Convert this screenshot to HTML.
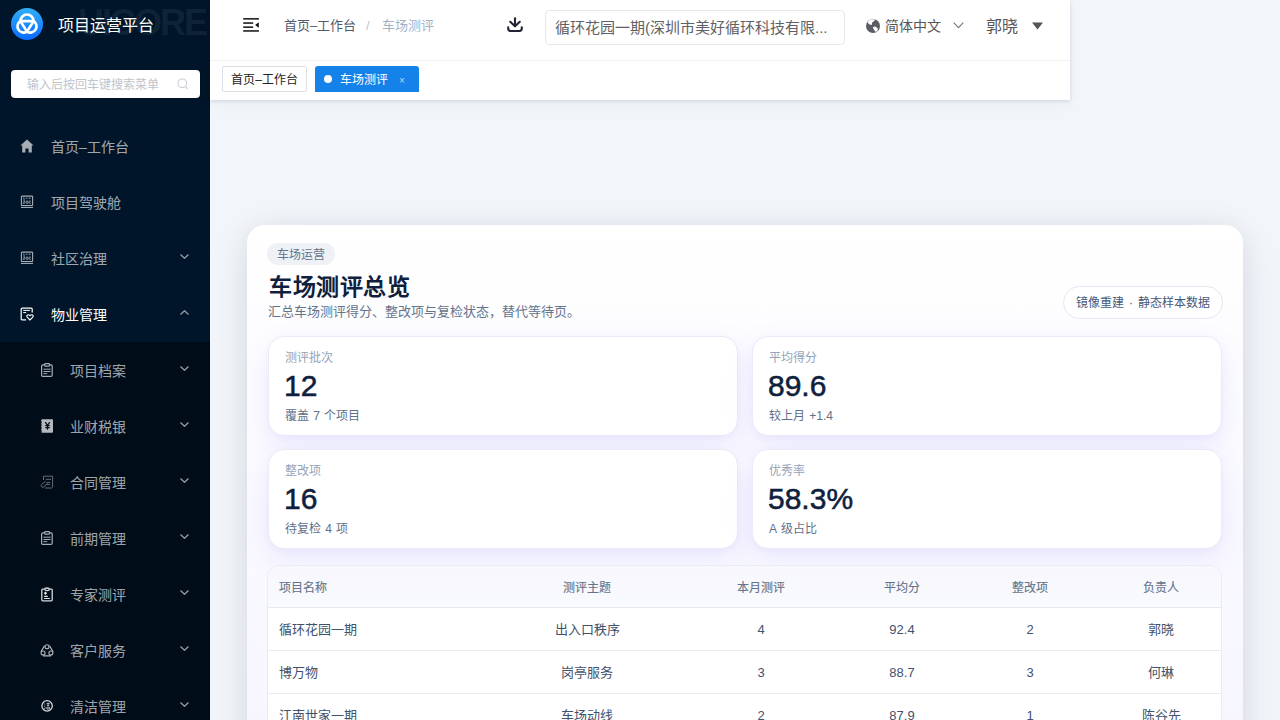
<!DOCTYPE html>
<html lang="zh-CN">
<head>
<meta charset="utf-8">
<style>
*{box-sizing:border-box;margin:0;padding:0}
html,body{width:1280px;height:720px;overflow:hidden}
body{font-family:"Liberation Sans",sans-serif;background:#f2f5fa;position:relative}
.abs{position:absolute}
/* sidebar */
#side{position:absolute;left:0;top:0;width:210px;height:720px;background:#001529;overflow:hidden}
#side .wm{position:absolute;left:78px;top:2px;font-size:36px;font-weight:bold;color:rgba(255,255,255,0.065);letter-spacing:-2px;white-space:nowrap}
#side .logo{position:absolute;left:11px;top:8px;width:32px;height:32px}
#side .title{position:absolute;left:58px;top:15px;font-size:16px;color:#fff;line-height:22px;white-space:nowrap}
#side .search{position:absolute;left:11px;top:70px;width:189px;height:28px;background:#fff;border-radius:4px}
#side .search span{position:absolute;left:16px;top:8px;font-size:12px;line-height:14px;color:#c0c4cc;white-space:nowrap}
#side .search svg{position:absolute;left:176px;top:78px}
.mi{position:absolute;left:0;width:210px;height:56px;color:rgba(255,255,255,0.65);font-size:14px}
.mi .t{position:absolute;left:51px;top:19px;line-height:20px;white-space:nowrap}
.mi .ic{position:absolute;left:20px;top:21px;width:14px;height:14px}
.mi .ch{position:absolute;left:179.5px;top:24px;width:9px;height:5px}
.mi.sub .t{left:70px}
.mi.sub .ic{left:40px}
#subbg{position:absolute;left:0;top:342px;width:210px;height:378px;background:#000c17}
/* header */
#hdr{position:absolute;left:210px;top:0;width:860px;height:100px;background:#fff;box-shadow:0 1px 4px rgba(0,21,41,0.12),0 4px 16px rgba(15,23,42,0.04)}
#hdr .line{position:absolute;left:0;top:60px;width:860px;height:1px;background:#f0f0f0}
.bc{position:absolute;top:16px;font-size:13px;line-height:20px;white-space:nowrap}
.sel{position:absolute;left:335px;top:10px;width:300px;height:35px;border:1px solid #e6e8ee;border-radius:4px}
.sel span{position:absolute;left:9px;top:6px;font-size:15px;line-height:22px;color:#5f6166;white-space:nowrap}
.tab{position:absolute;top:66px;height:26px;font-size:12px;line-height:26px;white-space:nowrap}
/* main card */
#card{position:absolute;left:247px;top:225px;width:996px;height:560px;border-radius:18px;background:linear-gradient(180deg,#ffffff 0%,#fbfbff 40%,#f6f5ff 100%);box-shadow:0 4px 26px rgba(20,24,40,0.08),0 10px 50px rgba(20,24,40,0.06)}
.badge{position:absolute;left:20px;top:18px;width:68px;height:22px;border-radius:11px;background:#eef1f5;color:#64748b;font-size:12px;line-height:24px;text-align:center}
.h1{position:absolute;left:22px;top:45px;font-size:23px;font-weight:bold;letter-spacing:0.6px;color:#0f1f3d;line-height:34px;white-space:nowrap}
.subt{position:absolute;left:21px;top:78px;font-size:13px;color:#64748b;line-height:18px;white-space:nowrap}
.pill{position:absolute;left:816px;top:61px;width:160px;height:33px;border:1px solid #e2e8f0;border-radius:17px;background:#fff;color:#46587a;font-size:12px;line-height:33px;text-align:center;white-space:nowrap}
.stat{position:absolute;width:470px;height:100px;border-radius:16px;background:#fff;box-shadow:0 2px 6px rgba(110,95,240,0.05),0 10px 30px rgba(110,95,240,0.11);border:1px solid #eceaf8}
.stat .l{position:absolute;left:16px;top:13px;font-size:12px;color:#94a3b8;line-height:16px;white-space:nowrap}
.stat .n{position:absolute;left:15px;top:32px;font-size:30px;font-weight:normal;-webkit-text-stroke:0.55px #0f1f3d;color:#0f1f3d;line-height:34px;white-space:nowrap}
.stat .s{position:absolute;left:16px;top:71px;font-size:12px;word-spacing:1px;color:#5f6f89;line-height:16px;white-space:nowrap}
#tbl{position:absolute;left:20px;top:340px;width:955px;height:240px;border:1px solid #e8ecf3;border-radius:12px;overflow:hidden;background:#fff}
#tbl .hd{position:absolute;left:0;top:0;width:953px;height:42px;background:linear-gradient(180deg,#f7f7fd,#f9fafd);border-bottom:1px solid #e5e9f0}
#tbl .row{position:absolute;left:0;width:953px;height:43px;border-bottom:1px solid #e9edf3}
.c{position:absolute;white-space:nowrap;text-align:center;transform:translateX(-50%)}
#tbl .hd .c,#tbl .hd .lft{top:14px;font-size:12px;color:#64748b;line-height:16px;-webkit-text-stroke:0.12px #64748b}
#tbl .row .c,#tbl .row .lft{top:13px;font-size:13px;color:#42516c;line-height:18px}
.lft{position:absolute;left:11px;white-space:nowrap}
</style>
</head>
<body>
<div id="side">
  <div id="subbg"></div>
  <div class="wm">UICORE</div>
  <svg class="logo" viewBox="0 0 32 32" width="32" height="32">
    <defs><linearGradient id="lg" x1="0" y1="0" x2="0" y2="1"><stop offset="0" stop-color="#30b0f8"/><stop offset="1" stop-color="#0a6aff"/></linearGradient></defs>
    <circle cx="16" cy="16" r="16" fill="url(#lg)"/>
    <g fill="none" stroke="#fff" stroke-width="2.7" stroke-linejoin="round"><path d="M9.4 13.1 L22.6 13.1 L16 23.6 Z"/><path d="M9.4 13.1 A6.6 6.6 0 0 1 22.6 13.1"/><path d="M22.6 13.1 A6.2 6.2 0 0 1 16 23.6"/><path d="M16 23.6 A6.2 6.2 0 0 1 9.4 13.1"/></g>
  </svg>
  <div class="title">项目运营平台</div>
  <div class="search"><span>输入后按回车键搜索菜单</span>
    <svg style="position:absolute;left:166px;top:8px" width="12" height="12" viewBox="0 0 12 12"><circle cx="5.3" cy="5.3" r="4.3" fill="none" stroke="#c9ccd3" stroke-width="1.1"/><path d="M8.4 8.4 L10.8 10.8" stroke="#c9ccd3" stroke-width="1.2"/></svg>
  </div>

  <div class="mi" style="top:118px">
    <svg class="ic" viewBox="0 0 14 14"><path d="M7 0.5 L13.6 6.6 L11.8 6.6 L11.8 13.5 L8.6 13.5 L8.6 9.4 L5.4 9.4 L5.4 13.5 L2.2 13.5 L2.2 6.6 L0.4 6.6 Z" fill="#a6adb4"/></svg>
    <div class="t">首页–工作台</div>
  </div>
  <div class="mi" style="top:174px">
    <svg class="ic" viewBox="0 0 14 14"><g fill="none" stroke="#a6adb4" stroke-width="1.1"><rect x="1.4" y="1.1" width="11.2" height="9.4" rx="0.6"/><path d="M1 12.4 H13"/></g><g fill="#a6adb4"><rect x="3" y="2.7" width="1.6" height="0.9"/><rect x="5.8" y="2.7" width="1.6" height="0.9"/><rect x="8.6" y="2.7" width="2" height="0.9"/><rect x="3.6" y="4.2" width="1" height="4.3"/><rect x="2.8" y="7.7" width="1.5" height="0.9"/></g><g fill="none" stroke="#a6adb4" stroke-width="0.9"><circle cx="7" cy="7.2" r="1.2"/><path d="M10.8 6.3 A1.2 1.2 0 1 0 10.8 8.1"/></g></svg>
    <div class="t">项目驾驶舱</div>
  </div>
  <div class="mi" style="top:230px">
    <svg class="ic" viewBox="0 0 14 14"><g fill="none" stroke="#a6adb4" stroke-width="1.1"><rect x="1.4" y="1.1" width="11.2" height="9.4" rx="0.6"/><path d="M1 12.4 H13"/></g><g fill="#a6adb4"><rect x="3" y="2.7" width="1.6" height="0.9"/><rect x="5.8" y="2.7" width="1.6" height="0.9"/><rect x="8.6" y="2.7" width="2" height="0.9"/><rect x="3.6" y="4.2" width="1" height="4.3"/><rect x="2.8" y="7.7" width="1.5" height="0.9"/></g><g fill="none" stroke="#a6adb4" stroke-width="0.9"><circle cx="7" cy="7.2" r="1.2"/><path d="M10.8 6.3 A1.2 1.2 0 1 0 10.8 8.1"/></g></svg>
    <div class="t">社区治理</div>
    <svg class="ch" viewBox="0 0 9 5"><path d="M0.5 0.5 L4.5 4.3 L8.5 0.5" fill="none" stroke="#959ca3" stroke-width="1.25"/></svg>
  </div>
  <div class="mi" style="top:286px;color:#fff">
    <svg class="ic" viewBox="0 0 14 14"><g fill="none" stroke="#fff" stroke-width="1.2"><path d="M6.1 12.9 H2.2 Q1.2 12.9 1.2 11.9 V2.1 Q1.2 1.1 2.2 1.1 H11.2 Q12.2 1.1 12.2 2.1 V5.4"/></g><path d="M3.2 3.4 H9.9 M3.2 5.6 H6.2" stroke="#fff" stroke-width="1"/><path d="M10 13 L7.4 10.4 Q6.5 9.3 7.1 8.4 Q8.2 7.1 10 8.7 Q11.8 7.1 12.9 8.4 Q13.5 9.3 12.6 10.4 Z" fill="none" stroke="#fff" stroke-width="1.1"/></svg>
    <div class="t">物业管理</div>
    <svg class="ch" viewBox="0 0 9 5"><path d="M0.5 4.5 L4.5 0.7 L8.5 4.5" fill="none" stroke="#959ca3" stroke-width="1.25"/></svg>
  </div>

  <div class="mi sub" style="top:342px">
    <svg class="ic" style="height:15px" viewBox="0 0 14 15"><g fill="none" stroke="#a6adb4" stroke-width="1.2"><rect x="1.6" y="1.8" width="10.6" height="11.6" rx="1.2"/><rect x="4.6" y="0.6" width="4.9" height="2.6" rx="0.8" fill="#000c17"/></g><path d="M3.4 6.2 H10.6 M3.4 8.5 H10.6 M3.4 10.6 H7.3" stroke="#a6adb4" stroke-width="1"/></svg>
    <div class="t">项目档案</div>
    <svg class="ch" viewBox="0 0 9 5"><path d="M0.5 0.5 L4.5 4.3 L8.5 0.5" fill="none" stroke="#959ca3" stroke-width="1.25"/></svg>
  </div>
  <div class="mi sub" style="top:398px">
    <svg class="ic" viewBox="0 0 14 14"><rect x="1.3" y="0.3" width="11.7" height="13.4" rx="1" fill="#b5b9be"/><g fill="#000c17"><circle cx="1.3" cy="3" r="0.6"/><circle cx="1.3" cy="6" r="0.6"/><circle cx="1.3" cy="9" r="0.6"/><circle cx="1.3" cy="12" r="0.6"/></g><path d="M5.2 3.2 L7.5 6.3 L9.8 3.2 M7.5 6.3 V10.8 M5.3 6.7 H9.7 M5.3 8.6 H9.7" fill="none" stroke="#000c17" stroke-width="1.2"/></svg>
    <div class="t">业财税银</div>
    <svg class="ch" viewBox="0 0 9 5"><path d="M0.5 0.5 L4.5 4.3 L8.5 0.5" fill="none" stroke="#959ca3" stroke-width="1.25"/></svg>
  </div>
  <div class="mi sub" style="top:454px">
    <svg class="ic" viewBox="0 0 14 14"><g fill="none" stroke="#666c73" stroke-width="1"><path d="M3.5 5 V1.2 H12.6 V12 L11.5 13 H5"/><path d="M5.8 4.3 H11 M6.6 7.4 H10.2 M6.6 9.4 H10.2"/><path d="M5.5 6.3 L1.6 9.4 Q0.4 10.7 1.8 11.9 Q3.2 12.9 4.3 11.6 L7.2 8.3"/></g></svg>
    <div class="t">合同管理</div>
    <svg class="ch" viewBox="0 0 9 5"><path d="M0.5 0.5 L4.5 4.3 L8.5 0.5" fill="none" stroke="#959ca3" stroke-width="1.25"/></svg>
  </div>
  <div class="mi sub" style="top:510px">
    <svg class="ic" style="height:15px" viewBox="0 0 14 15"><g fill="none" stroke="#a6adb4" stroke-width="1.2"><rect x="1.6" y="1.8" width="10.6" height="11.6" rx="1.2"/><rect x="4.6" y="0.6" width="4.9" height="2.6" rx="0.8" fill="#000c17"/></g><path d="M3.4 6.2 H10.6 M3.4 8.5 H10.6 M3.4 10.6 H7.3" stroke="#a6adb4" stroke-width="1"/></svg>
    <div class="t">前期管理</div>
    <svg class="ch" viewBox="0 0 9 5"><path d="M0.5 0.5 L4.5 4.3 L8.5 0.5" fill="none" stroke="#959ca3" stroke-width="1.25"/></svg>
  </div>
  <div class="mi sub" style="top:566px">
    <svg class="ic" style="height:15px" viewBox="0 0 14 15"><g fill="none" stroke="#d5d8dc" stroke-width="1.3"><path d="M4.2 2.2 H2.6 Q1.8 2.2 1.8 3 V13 Q1.8 13.8 2.6 13.8 H11.4 Q12.2 13.8 12.2 13 V3 Q12.2 2.2 11.4 2.2 H9.8"/><ellipse cx="7" cy="2.3" rx="2.3" ry="1.3"/></g><path d="M5.5 4.7 V7.7 M4 6.2 H7" stroke="#e6e8ea" stroke-width="1.2"/><path d="M4.1 9.4 H7.8 M4.1 11.5 H9.9" stroke="#e6e8ea" stroke-width="1.1"/></svg>
    <div class="t">专家测评</div>
    <svg class="ch" viewBox="0 0 9 5"><path d="M0.5 0.5 L4.5 4.3 L8.5 0.5" fill="none" stroke="#959ca3" stroke-width="1.25"/></svg>
  </div>
  <div class="mi sub" style="top:622px">
    <svg class="ic" viewBox="0 0 14 14"><g fill="none" stroke="#b0b5ba" stroke-width="1.1"><circle cx="7" cy="3.7" r="2"/><circle cx="3.1" cy="10" r="2"/><circle cx="10.9" cy="10" r="2"/><path d="M4.6 2.6 L0.9 8.9 M9.4 2.6 L13.1 8.9 M3 12.9 H11"/></g></svg>
    <div class="t">客户服务</div>
    <svg class="ch" viewBox="0 0 9 5"><path d="M0.5 0.5 L4.5 4.3 L8.5 0.5" fill="none" stroke="#959ca3" stroke-width="1.25"/></svg>
  </div>
  <div class="mi sub" style="top:678px">
    <svg class="ic" viewBox="0 0 14 14"><circle cx="7.1" cy="6.9" r="5.2" fill="none" stroke="#d4d7da" stroke-width="1.3"/><path d="M4.3 4.9 L5.2 5.5 M4.1 7.1 L5.1 7.4 M4.4 10 L5.4 8.6 M6.6 4.6 H9.6 M8.1 3.6 V6.4 M6.9 6.4 H9.3 M6.9 8.2 H9.4 V10 H6.9 Z" fill="none" stroke="#c8cbcf" stroke-width="0.9"/></svg>
    <div class="t">清洁管理</div>
    <svg class="ch" viewBox="0 0 9 5"><path d="M0.5 0.5 L4.5 4.3 L8.5 0.5" fill="none" stroke="#959ca3" stroke-width="1.25"/></svg>
  </div>
</div>

<div id="hdr">
  <div class="line"></div>
  <svg class="abs" style="left:33px;top:18px" width="16" height="14" viewBox="0 0 16 14"><g fill="#111"><rect x="0.2" y="0.1" width="15.7" height="1.5"/><rect x="0.2" y="4.3" width="10" height="1.5"/><rect x="0.2" y="8.4" width="10" height="1.5"/><rect x="0.2" y="12.2" width="15.7" height="1.5"/><path d="M15.8 4.3 L12.1 7 L15.8 9.7 Z"/></g></svg>
  <div class="bc" style="left:74px;color:#515a6e">首页–工作台</div>
  <div class="bc" style="left:156px;color:#c0c4cc">/</div>
  <div class="bc" style="left:172px;color:#a3b1c6">车场测评</div>
  <svg class="abs" style="left:297px;top:17px" width="16" height="15" viewBox="0 0 16 15"><g fill="none" stroke="#222436" stroke-width="2.1" stroke-linecap="round" stroke-linejoin="round"><path d="M8 1.2 V8.6"/><path d="M3.2 4.8 L8 9.3 L12.8 4.8"/><path d="M1.2 10.3 V11.6 Q1.2 14 3.6 14 H12.4 Q14.8 14 14.8 11.6 V10.3"/></g></svg>
  <div class="sel"><span>循环花园一期(深圳市美好循环科技有限...</span></div>
  <svg class="abs" style="left:656px;top:18.7px" width="14" height="14" viewBox="0 0 14 14"><circle cx="7" cy="7" r="7" fill="#5b5d64"/><path d="M4.9 0.2 L9.8 0.4 L6.2 3.6 L5.8 6.1 L3 5.2 L1.6 3.3 L2.7 1.8 Z M7 7.9 L9.4 7.6 L11.9 9.4 L11.3 12.2 L9.4 12.8 L8.2 11 L7 9.1 Z" fill="#fff"/></svg>
  <div class="abs" style="left:675px;top:16px;font-size:14px;line-height:20px;color:#555;white-space:nowrap">简体中文</div>
  <svg class="abs" style="left:743px;top:22px" width="11" height="7" viewBox="0 0 11 7"><path d="M0.7 0.7 L5.5 5.6 L10.3 0.7" fill="none" stroke="#777" stroke-width="1.1"/></svg>
  <div class="abs" style="left:776px;top:16px;font-size:16px;line-height:22px;color:#555;white-space:nowrap">郭晓</div>
  <svg class="abs" style="left:822px;top:22px" width="11" height="8" viewBox="0 0 11 8"><path d="M0 0.5 H11 L5.5 7.5 Z" fill="#555"/></svg>

  <div class="tab" style="left:12px;width:85px;border:1px solid #dcdfe6;border-radius:2px;background:#fff;color:#222;text-align:center">首页–工作台</div>
  <div class="tab" style="left:105px;width:104px;background:#1482e8;border-radius:3px 3px 0 0;color:#fff">
    <span class="abs" style="left:9px;top:9px;width:8px;height:8px;border-radius:50%;background:#fff"></span>
    <span class="abs" style="left:25px;top:1px">车场测评</span>
    <span class="abs" style="left:84px;top:2px;font-size:10px;color:#b9d6f8">×</span>
  </div>
</div>

<div id="card">
  <div class="badge">车场运营</div>
  <div class="h1">车场测评总览</div>
  <div class="subt">汇总车场测评得分、整改项与复检状态，替代等待页。</div>
  <div class="pill">镜像重建 <span style="margin:0 2px">·</span> 静态样本数据</div>

  <div class="stat" style="left:21px;top:111px"><div class="l">测评批次</div><div class="n">12</div><div class="s">覆盖 7 个项目</div></div>
  <div class="stat" style="left:505px;top:111px"><div class="l">平均得分</div><div class="n">89.6</div><div class="s">较上月 +1.4</div></div>
  <div class="stat" style="left:21px;top:224px"><div class="l">整改项</div><div class="n">16</div><div class="s">待复检 4 项</div></div>
  <div class="stat" style="left:505px;top:224px"><div class="l">优秀率</div><div class="n">58.3%</div><div class="s">A 级占比</div></div>

  <div id="tbl">
    <div class="hd">
      <div class="lft">项目名称</div>
      <div class="c" style="left:319px">测评主题</div>
      <div class="c" style="left:493px">本月测评</div>
      <div class="c" style="left:634px">平均分</div>
      <div class="c" style="left:762px">整改项</div>
      <div class="c" style="left:893px">负责人</div>
    </div>
    <div class="row" style="top:42px">
      <div class="lft">循环花园一期</div>
      <div class="c" style="left:319px">出入口秩序</div>
      <div class="c" style="left:493px">4</div>
      <div class="c" style="left:634px">92.4</div>
      <div class="c" style="left:762px">2</div>
      <div class="c" style="left:893px">郭晓</div>
    </div>
    <div class="row" style="top:85px">
      <div class="lft">博万物</div>
      <div class="c" style="left:319px">岗亭服务</div>
      <div class="c" style="left:493px">3</div>
      <div class="c" style="left:634px">88.7</div>
      <div class="c" style="left:762px">3</div>
      <div class="c" style="left:893px">何琳</div>
    </div>
    <div class="row" style="top:128px">
      <div class="lft">江南世家一期</div>
      <div class="c" style="left:319px">车场动线</div>
      <div class="c" style="left:493px">2</div>
      <div class="c" style="left:634px">87.9</div>
      <div class="c" style="left:762px">1</div>
      <div class="c" style="left:893px">陈谷先</div>
    </div>
  </div>
</div>
</body>
</html>
